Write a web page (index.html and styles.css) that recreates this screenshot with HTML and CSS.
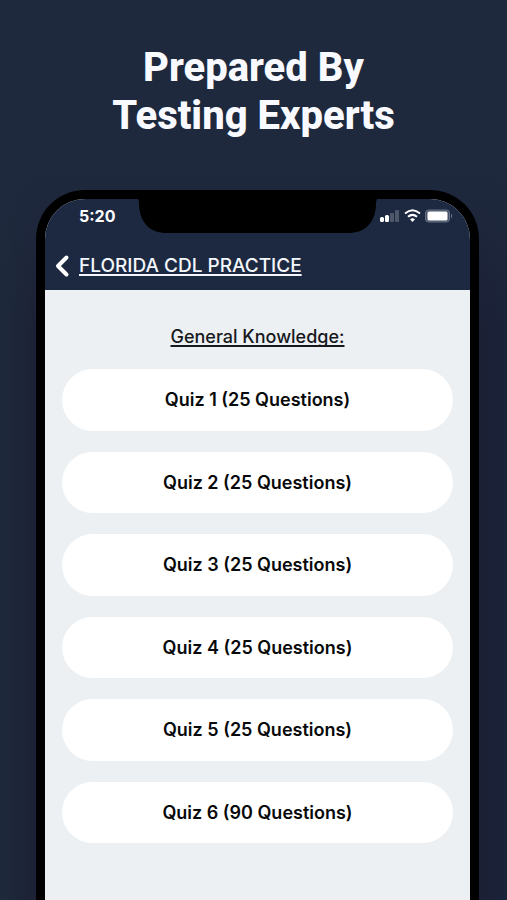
FILE: index.html
```html
<!DOCTYPE html>
<html lang="en">
<head>
<meta charset="utf-8">
<meta name="viewport" content="width=device-width, initial-scale=1">
<title>Florida CDL Practice</title>
<link rel="stylesheet" href="styles.css">
</head>
<body>
<h1 class="headline">Prepared By<br>Testing Experts</h1>
<main class="phone">
  <div class="top">
    <div class="status">
      <span class="time">5:20</span>
      <svg class="notch" viewBox="0 0 239 34" aria-hidden="true"><path d="M0 0Q1 2 1 6C2 24 12 34 29 34H210C227 34 237 24 238 6Q238 2 239 0Z"/></svg>
      <svg class="indicators" viewBox="0 0 74 16" aria-hidden="true">
        <g fill="#fff">
          <rect x="1" y="9" width="4" height="5" rx="1.500"/>
          <rect x="6" y="7" width="4" height="7" rx="1.500"/>
          <rect x="11" y="5" width="4" height="9" rx="1" opacity=".22"/>
          <rect x="16" y="2" width="4" height="12" rx="1" opacity=".22"/>
        </g>
        <g fill="none" stroke="#fff" stroke-width="2">
          <path d="M26 5.500Q33.500 -1 41 5.500"/>
          <path d="M29 8.800Q33.500 5 38 8.800"/>
        </g>
        <path d="M31 11.200Q33.500 9.200 36 11.200L33.500 14Z" fill="#fff"/>
        <rect x="46.500" y="2" width="24" height="12" rx="3" fill="#475266" stroke="#667084"/>
        <rect x="48.500" y="3.500" width="20" height="9" rx="1.500" fill="#fff"/>
        <path d="M72 5.500Q74.500 8 72 10.500Z" fill="#667084"/>
      </svg>
    </div>
    <nav class="bar">
      <a class="back" href="#">
        <svg class="chevron" viewBox="0 0 16 24" aria-hidden="true"><path d="M12.500 3.500L4 12L12.500 20.500"/></svg>
        <span class="label">FLORIDA CDL PRACTICE</span>
      </a>
    </nav>
  </div>
  <section class="content">
    <h2 class="section-title">General Knowledge:</h2>
    <div class="quizzes">
      <button class="quiz" type="button">Quiz 1 (25 Questions)</button>
      <button class="quiz" type="button">Quiz 2 (25 Questions)</button>
      <button class="quiz" type="button">Quiz 3 (25 Questions)</button>
      <button class="quiz" type="button">Quiz 4 (25 Questions)</button>
      <button class="quiz" type="button">Quiz 5 (25 Questions)</button>
      <button class="quiz" type="button">Quiz 6 (90 Questions)</button>
    </div>
  </section>
</main>
</body>
</html>
```
FILE: styles.css
```css
* {
  box-sizing: border-box;
}

body {
  margin: 0;
  min-height: 100vh;
  padding-top: 44px;
  display: flex;
  flex-direction: column;
  background: linear-gradient(#1e293d, #1e293d 170px, transparent 330px), linear-gradient(90deg, #1d2a3b, #1d2035 8%, #1b2035 95%, #1b2338);
  font-family: Inter, "Liberation Sans", sans-serif;
}

.headline {
  margin: 0 0 50px;
  color: #f8faff;
  font: 800 40px/48px Roboto, sans-serif;
  text-align: center;
}

.phone {
  flex: 1;
  display: flex;
  flex-direction: column;
  margin: 0 28px 0 36px;
  border: 9px solid #000;
  border-bottom: 0;
  border-radius: 49px 49px 0 0;
  background: #ecf0f3;
  overflow: hidden;
}

.top {
  background: #1d2941;
}

.status {
  display: grid;
  grid-template-columns: 93px 1fr 93px;
  height: 41px;
}

.time {
  padding: 7px 0 0 34px;
  color: #fff;
  font-size: 16px;
  font-weight: 700;
  line-height: 20px;
}

.notch {
  width: 100%;
  height: 34px;
}

.indicators {
  width: 74px;
  height: 16px;
  margin: 9px 0 0 2px;
}

.bar {
  height: 50px;
  padding: 13px 9px;
}

.back {
  display: flex;
  align-items: center;
  gap: 9px;
  color: #f3f6fb;
}

.chevron {
  width: 16px;
  height: 24px;
  fill: none;
  stroke: #fff;
  stroke-width: 4;
  stroke-linecap: round;
  stroke-linejoin: round;
}

.label {
  font-size: 19px;
  font-weight: 500;
  line-height: 26px;
}

.back,
.section-title {
  text-decoration-line: underline;
  text-decoration-thickness: 2px;
  text-underline-offset: 2px;
  text-decoration-skip-ink: none;
}

.content {
  padding: 35px 17px;
}

.section-title {
  margin: 0 0 20px;
  color: #17191c;
  font-size: 18px;
  font-weight: 500;
  line-height: 24px;
  text-align: center;
}

.quizzes {
  display: grid;
  grid-auto-rows: 1fr;
  gap: 21px;
  min-height: 474px;
}

.quiz {
  width: 100%;
  padding: 1px 16px 0;
  border: 0;
  border-radius: 31px;
  background: #fff;
  color: #08090a;
  font: 600 18px/24px Inter, "Liberation Sans", sans-serif;
}
```
